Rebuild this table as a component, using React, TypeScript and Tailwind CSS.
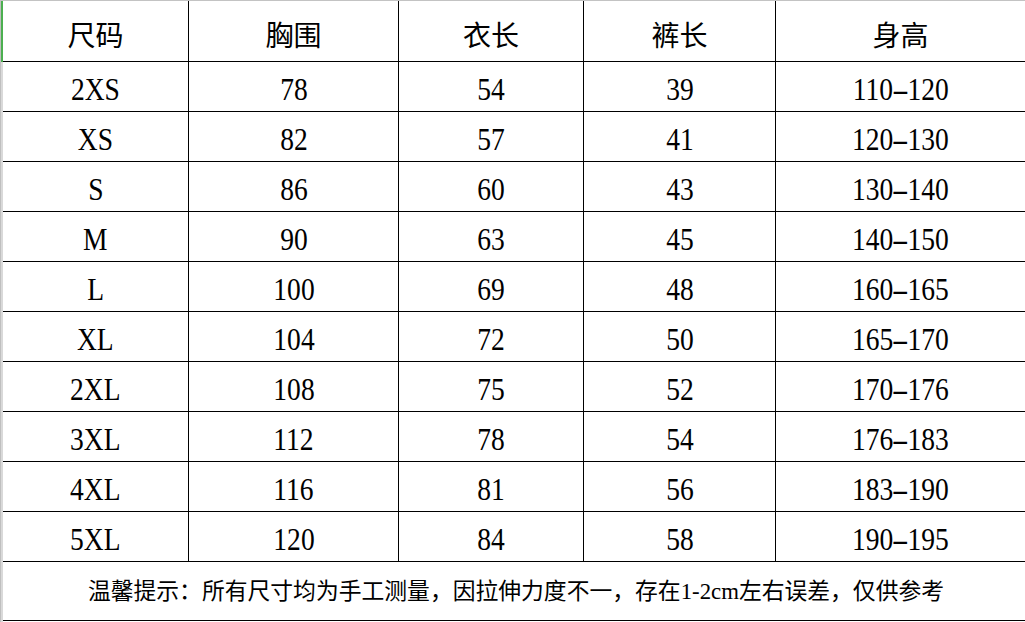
import React from 'react'

const headers = ['尺码', '胸围', '衣长', '裤长', '身高']

const rows: string[][] = [
  ['2XS', '78', '54', '39', '110-120'],
  ['XS', '82', '57', '41', '120-130'],
  ['S', '86', '60', '43', '130-140'],
  ['M', '90', '63', '45', '140-150'],
  ['L', '100', '69', '48', '160-165'],
  ['XL', '104', '72', '50', '165-170'],
  ['2XL', '108', '75', '52', '170-176'],
  ['3XL', '112', '78', '54', '176-183'],
  ['4XL', '116', '81', '56', '183-190'],
  ['5XL', '120', '84', '58', '190-195'],
]

const grid = 'grid grid-cols-[186px_210px_185px_192px_1fr]'
const font = "font-['Liberation_Serif','Noto_Sans_CJK_SC',serif]"

function Cell({ children, last, header }: { children: React.ReactNode; last?: boolean; header?: boolean }) {
  return (
    <div
      className={`flex items-center justify-center ${last ? '' : 'border-r border-black'} ${
        header ? 'pt-[5px] text-[28px]' : 'pt-[5px] text-[32px]'
      }`}
    >
      {children}
    </div>
  )
}

// SimSun-style ranges have a longer dash than Liberation Serif's
function Value({ v }: { v: string }) {
  const parts = v.split('-')
  if (parts.length < 2) return <>{v}</>
  return (
    <>
      {parts[0]}
      <span className="inline-block mx-[3px] scale-x-[1.9]">-</span>
      {parts[1]}
    </>
  )
}

export default function App() {
  return (
    <div className={`w-[1025px] h-[622px] overflow-hidden bg-white text-black ${font}`}>
      <div className="h-px bg-[#c3c3c3]" />
      <div className="flex h-[621px]">
        <div className="w-px bg-[#bfbfbf]" />
        <div className="w-[2px] flex flex-col">
          <div className="h-[61px] bg-[#4caf50]" />
          <div className="flex-1 bg-[#d9d9d9]" />
        </div>
        <div className="flex-1 flex flex-col">
          <div className={`${grid} h-[61px] border-b border-black`}>
            {headers.map((h, i) => (
              <Cell key={h} header last={i === headers.length - 1}>
                <span className="font-['Noto_Sans_CJK_SC',sans-serif] leading-none">{h}</span>
              </Cell>
            ))}
          </div>
          {rows.map((r) => (
            <div key={r[0]} className={`${grid} h-[50px] border-b border-black`}>
              {r.map((v, i) => (
                <Cell key={i} last={i === r.length - 1}>
                  <span className="inline-block leading-none scale-x-[0.86]">
                    <Value v={v} />
                  </span>
                </Cell>
              ))}
            </div>
          ))}
          <div className="h-[59px] border-b border-black flex items-center justify-center pt-[3px] pl-[4px]">
            <span className="text-[22.8px] leading-none">
              温馨提示：所有尺寸均为手工测量，因拉伸力度不一，存在1-2cm左右误差，仅供参考
            </span>
          </div>
        </div>
      </div>
    </div>
  )
}
